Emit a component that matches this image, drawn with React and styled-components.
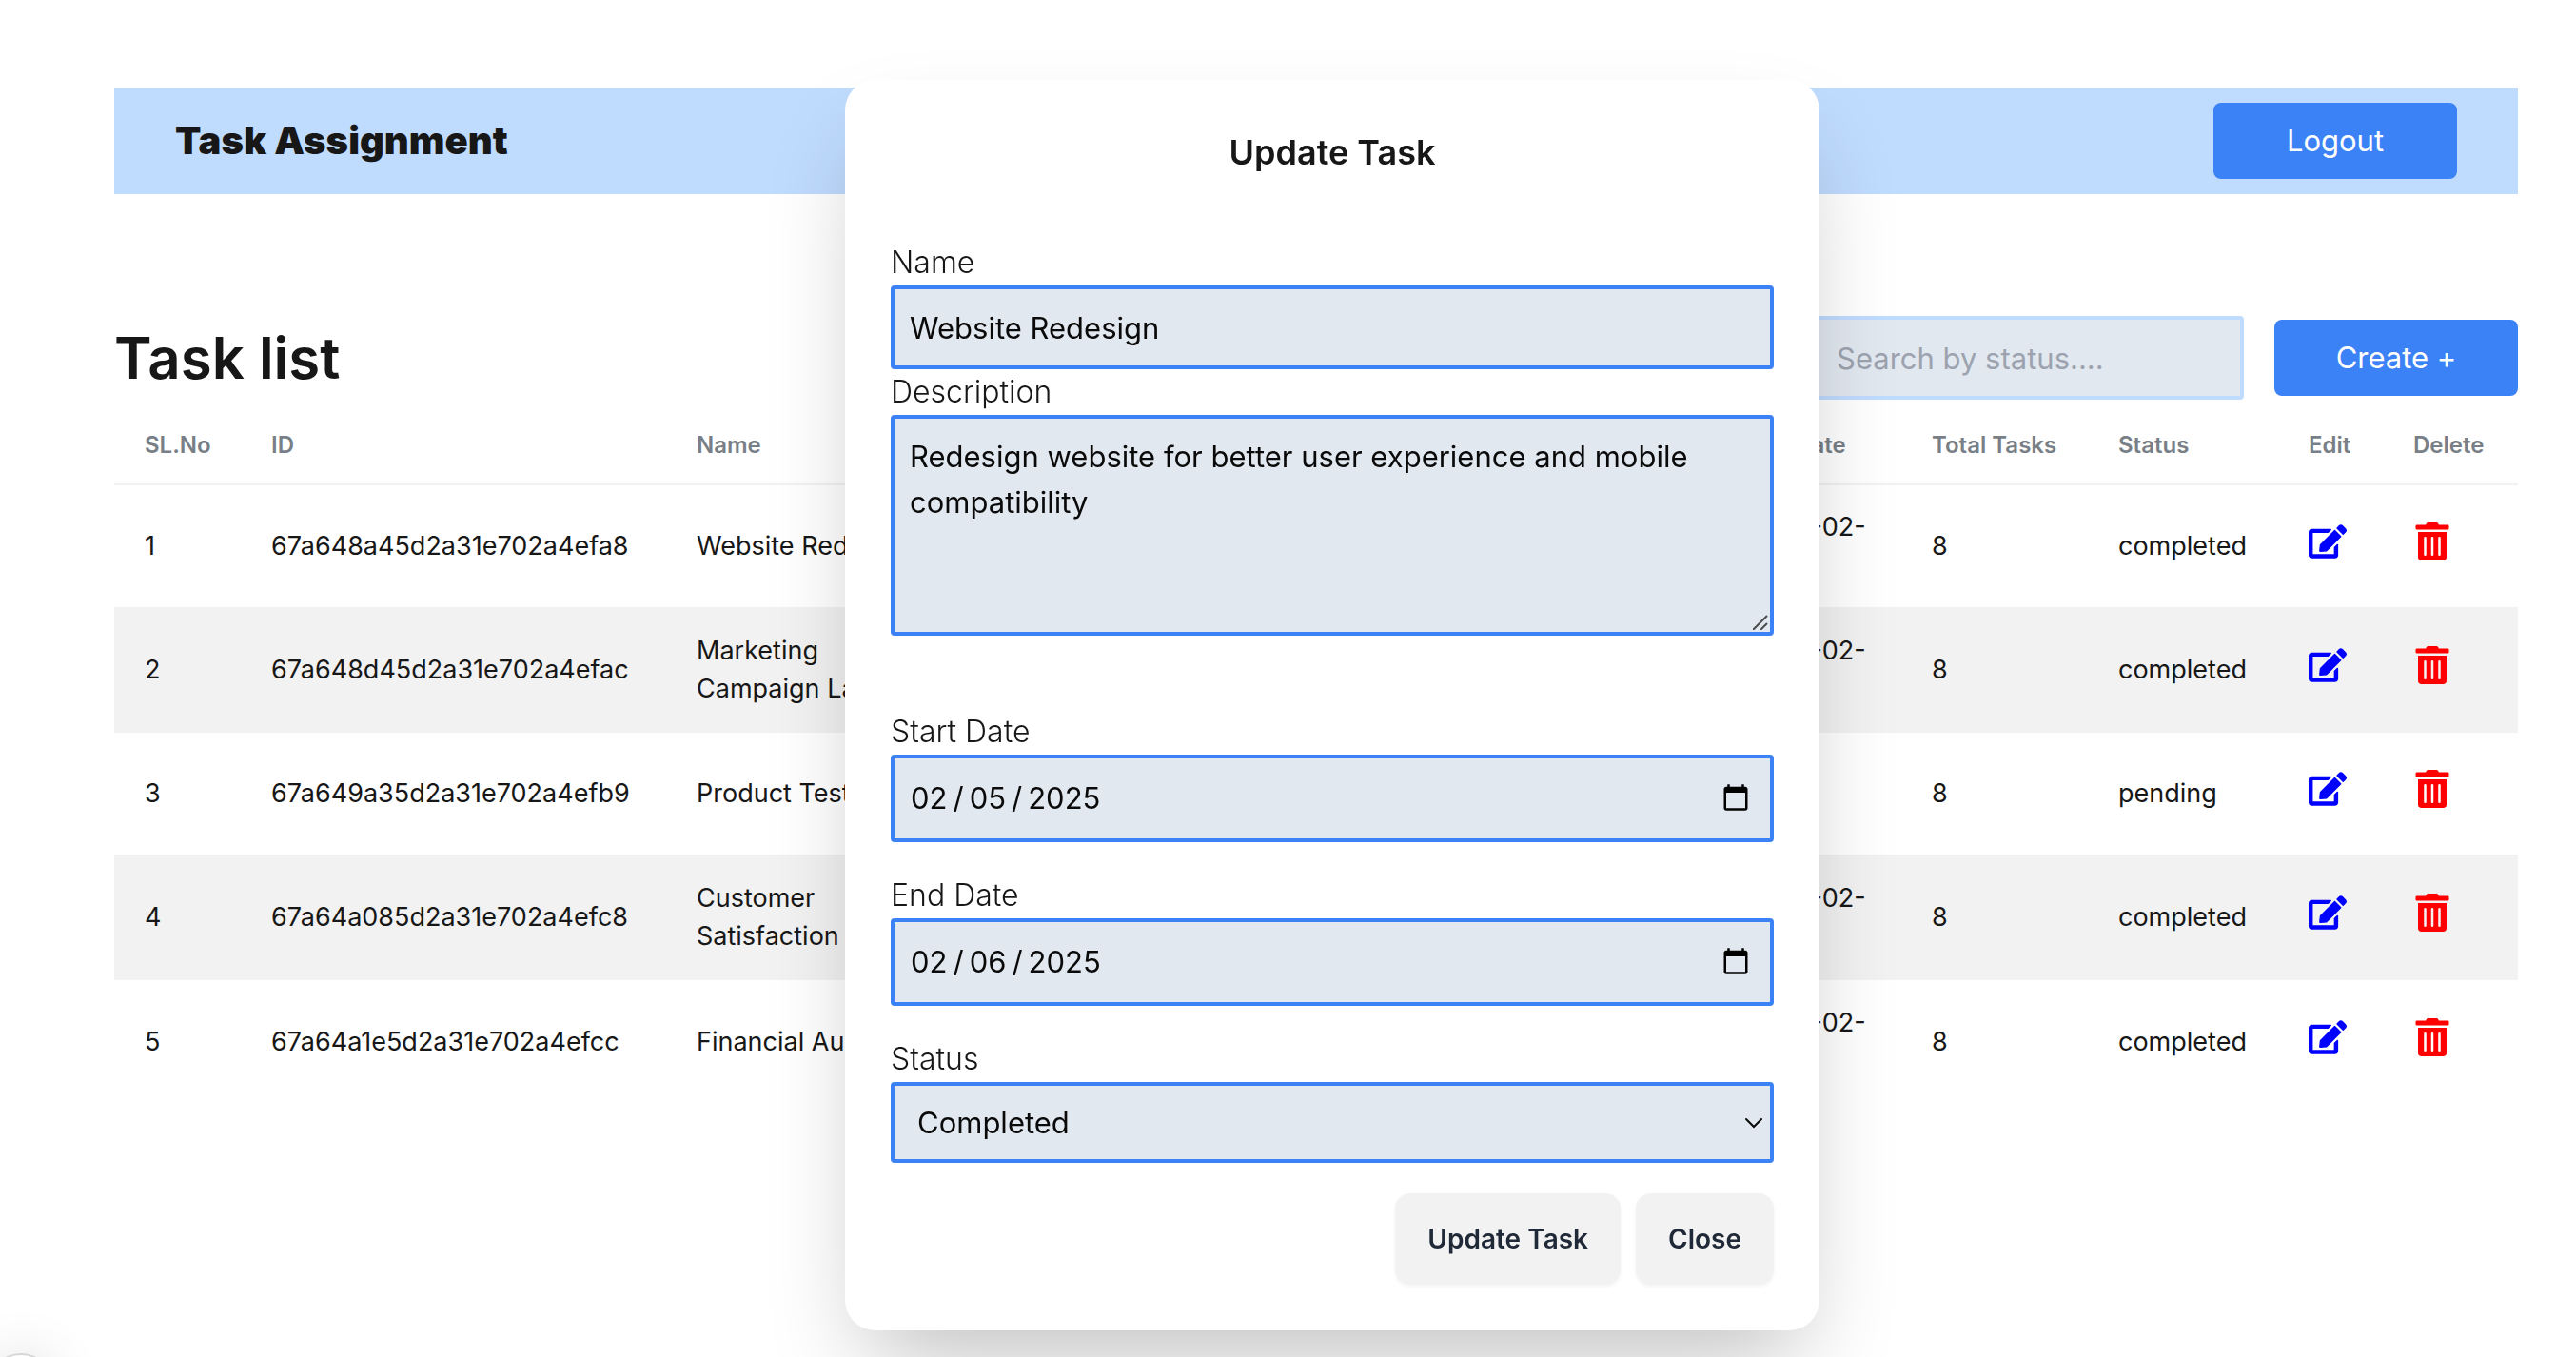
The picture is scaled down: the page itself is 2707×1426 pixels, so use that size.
import React, { useState } from "react";
import styled, { createGlobalStyle } from "styled-components";
import { FaEdit, FaTrashAlt } from "react-icons/fa";

const GlobalStyle = createGlobalStyle`
  *, *::before, *::after { box-sizing: border-box; }
  body {
    margin: 0;
    background: #ffffff;
    color: #171717;
    font-family: Inter, "Liberation Sans", sans-serif;
    font-size: 32px;
    line-height: 48px;
  }
  button, input, select, textarea { font: inherit; color: inherit; margin: 0; }
  h1, h2, h3 { margin: 0; }
`;

const Page = styled.main`
  padding: 92px 61px 0 120px;
`;

const Header = styled.header`
  display: flex;
  align-items: center;
  justify-content: space-between;
  padding: 16px 64px;
  background: #bfdbfe;
`;

const Brand = styled.h1`
  font-size: 40px;
  font-weight: 900;
`;

const PrimaryButton = styled.button`
  width: 256px;
  height: 80px;
  border: 0;
  border-radius: 8px;
  background: #3b82f6;
  color: #ffffff;
  font-size: 31px;
  cursor: pointer;
`;

const Toolbar = styled.section`
  display: flex;
  align-items: center;
  justify-content: space-between;
  margin-top: 128px;
`;

const PageTitle = styled.h2`
  font-size: 60px;
  line-height: 72px;
  font-weight: 600;
`;

const Tools = styled.div`
  display: flex;
  align-items: center;
  gap: 32px;
`;

const SearchInput = styled.input`
  width: 512px;
  height: 88px;
  padding: 16px 80px;
  border: 4px solid #bfdbfe;
  border-radius: 4px;
  background: #e2e8f0;
  font-size: 31px;
  &::placeholder { color: #9ca3af; opacity: 1; }
`;

const Table = styled.table`
  width: 100%;
  table-layout: fixed;
  border-collapse: collapse;
  font-size: 27px;
  line-height: 40px;
`;

const Col = styled.col`
  width: ${(p) => p.$w || "auto"};
`;

const HeadCell = styled.th`
  padding: 28px 0 20px 32px;
  border-bottom: 2px solid #f2f2f2;
  color: #797f87;
  font-size: 24px;
  font-weight: 600;
  text-align: left;
  white-space: nowrap;
`;

const Row = styled.tr`
  height: 130px;
  background: ${(p) => (p.$striped ? "#f2f2f2" : "transparent")};
  &:not(:last-child) { border-bottom: 2px solid #f2f2f2; }
`;

const Cell = styled.td`
  padding: 24px 32px;
  padding-right: ${(p) => (p.$tight ? "0" : "32px")};
  vertical-align: middle;
  overflow: hidden;
  text-overflow: ellipsis;
  white-space: ${(p) => (p.$wrap ? "normal" : "nowrap")};
`;

const IconButton = styled.button`
  display: flex;
  padding: 0 0 10px;
  border: 0;
  background: none;
  color: ${(p) => p.$color};
  font-size: 40px;
  cursor: pointer;
`;

const Overlay = styled.div`
  position: fixed;
  inset: 0;
  display: flex;
  justify-content: center;
  align-items: flex-start;
  padding: 84px 0 0 93px;
`;

const Dialog = styled.div`
  width: 1024px;
  max-width: 100%;
  padding: 48px;
  border-radius: 32px;
  background: #ffffff;
  box-shadow: 0 50px 100px -24px rgba(0, 0, 0, 0.25);
`;

const DialogTitle = styled.h3`
  margin-bottom: 64px;
  font-size: 36px;
  line-height: 56px;
  font-weight: 600;
  text-align: center;
`;

const Field = styled.div`
  margin-bottom: ${(p) => p.$gap || "0"};
`;

const Label = styled.label`
  display: block;
  font-size: 32px;
  font-weight: 300;
`;

const Control = styled.div`
  position: relative;
`;

const boxStyle = `
  display: block;
  width: 100%;
  padding: 16px;
  border: 4px solid #3b82f6;
  border-radius: 4px;
  background: #e2e8f0;
  color: #0a0a0a;
  font-size: 31px;
  outline: none;
`;

const TextInput = styled.input`
  ${boxStyle}
  height: 88px;
`;

const DateInput = styled.input`
  ${boxStyle}
  height: 92px;
  &::-webkit-datetime-edit-text { padding: 0 5px; }
  &::-webkit-calendar-picker-indicator {
    width: 32px;
    height: 32px;
    padding: 0;
    margin-right: 4px;
  }
`;

const TextArea = styled.textarea`
  ${boxStyle}
  height: 232px;
  resize: none;
`;

const Select = styled.select`
  ${boxStyle}
  height: 85px;
  padding: 0 24px;
  appearance: none;
`;

const ResizeGrip = styled.svg`
  position: absolute;
  right: 6px;
  bottom: 6px;
  pointer-events: none;
`;

const Chevron = styled.svg`
  position: absolute;
  right: 12px;
  top: 50%;
  transform: translateY(-50%);
  pointer-events: none;
`;

const Actions = styled.div`
  display: flex;
  justify-content: flex-end;
  gap: 16px;
`;

const ActionButton = styled.button`
  height: 96px;
  padding: 0 34px;
  border: 0;
  border-radius: 16px;
  background: #f2f2f2;
  color: #1f2937;
  font-size: 28px;
  font-weight: 600;
  box-shadow: 0 2px 4px rgba(0, 0, 0, 0.05);
  cursor: pointer;
`;

const DevBadge = styled.div`
  position: fixed;
  left: -14px;
  bottom: -68px;
  width: 72px;
  height: 72px;
  border: 2px solid #d6d6d6;
  border-radius: 50%;
  background: #ffffff;
  box-shadow: 0 0 56px rgba(0, 0, 0, 0.12);
`;

const columns = [
  ["SL.No", "133px"],
  ["ID", "447px"],
  ["Name", "330px"],
  ["Description", ""],
  ["Start Date", "220px"],
  ["End Date", "194px"],
  ["Total Tasks", "196px"],
  ["Status", "200px"],
  ["Edit", "110px"],
  ["Delete", "142px"],
];

const tasks = [
  { id: "67a648a45d2a31e702a4efa8", name: "Website Redesign", start: "2025-02-05", end: "2025-02-06", status: "completed" },
  { id: "67a648d45d2a31e702a4efac", name: "Marketing Campaign\u00a0Launch", start: "2025-02-05", end: "2025-02-06", status: "completed" },
  { id: "67a649a35d2a31e702a4efb9", name: "Product Testing", start: "2025-02-05", end: "", status: "pending" },
  { id: "67a64a085d2a31e702a4efc8", name: "Customer Satisfaction", start: "2025-02-05", end: "2025-02-06", status: "completed" },
  { id: "67a64a1e5d2a31e702a4efcc", name: "Financial Audit", start: "2025-02-05", end: "2025-02-06", status: "completed" },
];

function TaskTable() {
  return (
    <Table>
      <colgroup>
        {columns.map(([name, w]) => (
          <Col key={name} $w={w} />
        ))}
      </colgroup>
      <thead>
        <tr>
          {columns.map(([name]) => (
            <HeadCell key={name} scope="col">{name}</HeadCell>
          ))}
        </tr>
      </thead>
      <tbody>
        {tasks.map((t, i) => (
          <Row key={t.id} $striped={i % 2 === 1}>
            <Cell>{i + 1}</Cell>
            <Cell>{t.id}</Cell>
            <Cell $wrap>{t.name}</Cell>
            <Cell />
            <Cell>{t.start}</Cell>
            <Cell $wrap>{t.end}</Cell>
            <Cell>8</Cell>
            <Cell $tight>{t.status}</Cell>
            <Cell $tight>
              <IconButton type="button" $color="#0000ff" aria-label={`Edit ${t.name}`}>
                <FaEdit />
              </IconButton>
            </Cell>
            <Cell>
              <IconButton type="button" $color="#ff0000" aria-label={`Delete ${t.name}`}>
                <FaTrashAlt />
              </IconButton>
            </Cell>
          </Row>
        ))}
      </tbody>
    </Table>
  );
}

function UpdateDialog({ onClose }) {
  return (
    <Overlay>
      <Dialog role="dialog" aria-labelledby="dialog-title">
        <DialogTitle id="dialog-title">Update Task</DialogTitle>
        <Field>
          <Label htmlFor="name">Name</Label>
          <TextInput id="name" type="text" defaultValue="Website Redesign" />
        </Field>
        <Field $gap="77px">
          <Label htmlFor="description">Description</Label>
          <Control>
            <TextArea
              id="description"
              defaultValue="Redesign website for better user experience and mobile compatibility"
            />
            <ResizeGrip width="16" height="16" viewBox="0 0 16 16" stroke="#4b4b4b" strokeWidth="2" aria-hidden="true">
              <path d="M0 16L15 1M8 16L15 9" />
            </ResizeGrip>
          </Control>
        </Field>
        <Field $gap="32px">
          <Label htmlFor="start">Start Date</Label>
          <DateInput id="start" type="date" defaultValue="2025-02-05" />
        </Field>
        <Field $gap="32px">
          <Label htmlFor="end">End Date</Label>
          <DateInput id="end" type="date" defaultValue="2025-02-06" />
        </Field>
        <Field $gap="32px">
          <Label htmlFor="status">Status</Label>
          <Control>
            <Select id="status" defaultValue="completed">
              <option value="completed">Completed</option>
              <option value="pending">Pending</option>
            </Select>
            <Chevron width="18" height="12" viewBox="0 0 18 12" fill="none" stroke="#0a0a0a" strokeWidth="2" strokeLinecap="round" aria-hidden="true">
              <path d="M1 2L9 10L17 2" />
            </Chevron>
          </Control>
        </Field>
        <Actions>
          <ActionButton type="button">Update Task</ActionButton>
          <ActionButton type="button" onClick={onClose}>Close</ActionButton>
        </Actions>
      </Dialog>
    </Overlay>
  );
}

export default function App() {
  const [open, setOpen] = useState(true);
  return (
    <>
      <GlobalStyle />
      <Page>
        <Header>
          <Brand>Task Assignment</Brand>
          <PrimaryButton type="button">Logout</PrimaryButton>
        </Header>
        <Toolbar>
          <PageTitle>Task list</PageTitle>
          <Tools>
            <SearchInput type="text" aria-label="Search by status" placeholder="Search by status...." />
            <PrimaryButton type="button">Create +</PrimaryButton>
          </Tools>
        </Toolbar>
        <TaskTable />
      </Page>
      <DevBadge />
      {open && <UpdateDialog onClose={() => setOpen(false)} />}
    </>
  );
}
